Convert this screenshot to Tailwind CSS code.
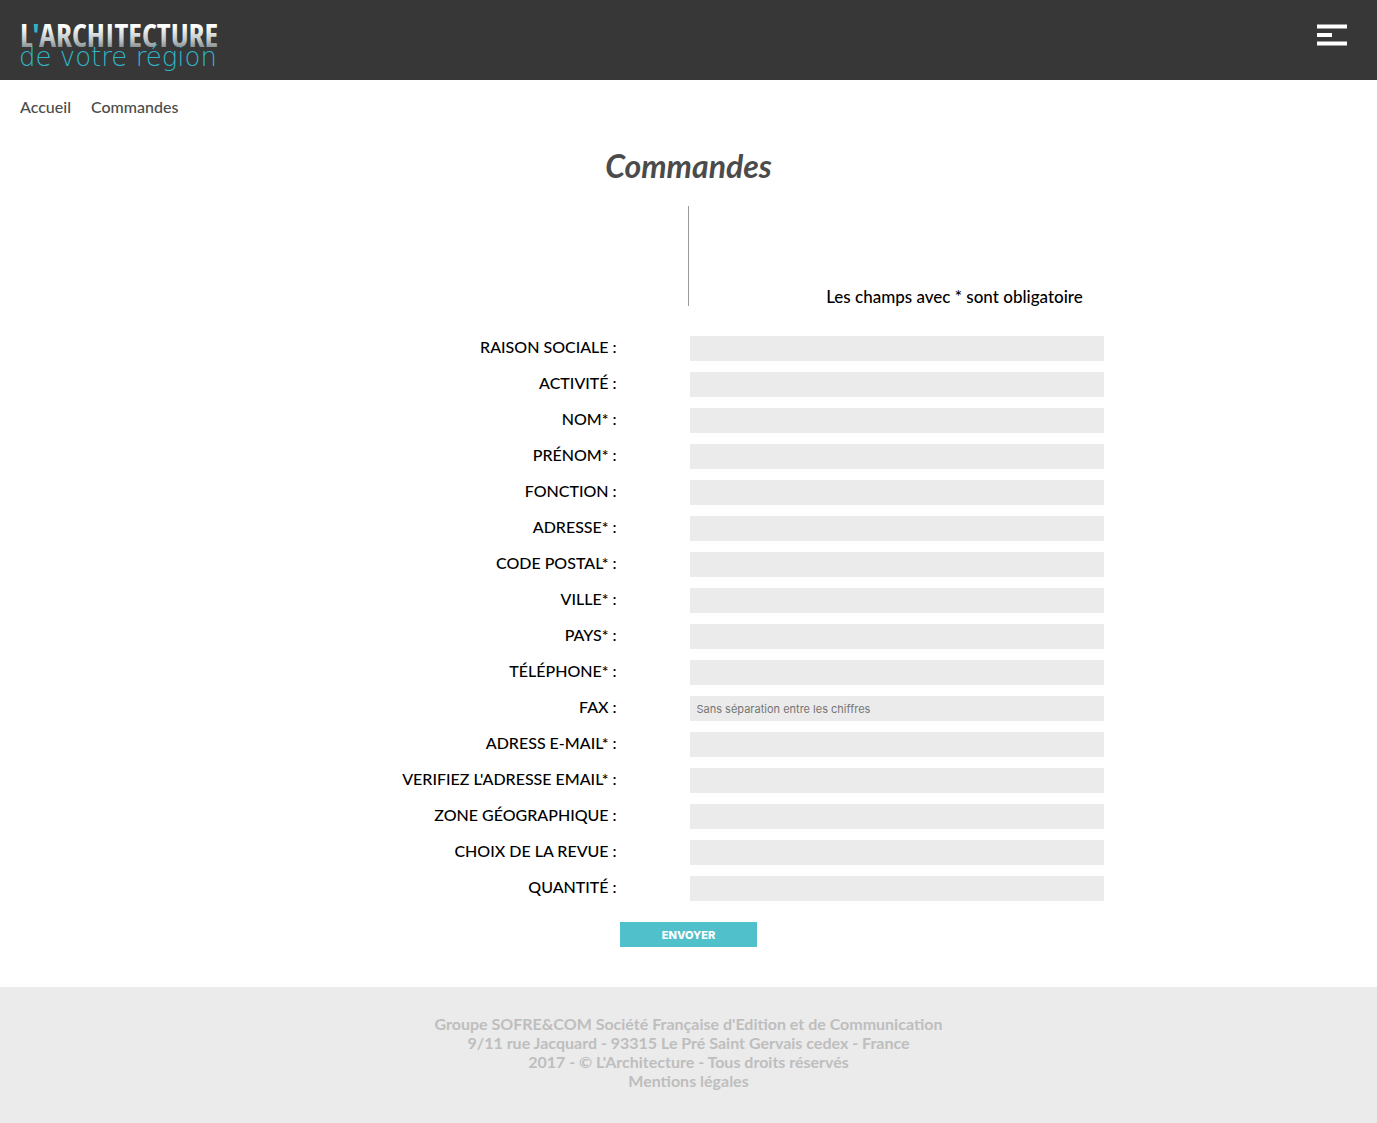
<!DOCTYPE html>
<html lang="fr">
<head>
<meta charset="utf-8">
<meta name="viewport" content="width=device-width, initial-scale=1">
<title>Commandes - L'Architecture de votre région</title>
<script src="https://cdn.jsdelivr.net/npm/@tailwindcss/browser@4"></script>
</head>
<body class="flex min-h-screen flex-col bg-white font-['Futura','Lato',sans-serif] text-base font-medium text-black">
<header class="flex h-20 items-start justify-between bg-[#373737] px-5">
  <a href="#" aria-label="L'Architecture de votre région">
    <svg class="block h-20 w-[204px]" viewBox="0 0 204 80">
      <defs>
        <linearGradient id="silver" x1="0" y1="0" x2="0" y2="1">
          <stop offset="0.3" stop-color="#ffffff"/>
          <stop offset="0.6" stop-color="#c3cccf"/>
          <stop offset="0.85" stop-color="#7d8385"/>
        </linearGradient>
      </defs>
      <text x="0" y="47" class="font-['Liberation_Sans_Narrow','Open_Sans_Condensed',sans-serif] text-[32px] font-bold" fill="url(#silver)">L<tspan fill="#2fb5c6">'</tspan>ARCHITECTURE</text>
      <text x="-1" y="66" class="font-['DejaVu_Sans_Light','DejaVu_Sans',sans-serif] text-[26px] font-extralight" fill="#2fb5c6">de votre région</text>
    </svg>
  </a>
  <button type="button" aria-label="Menu" class="mt-6 mr-2.5">
    <svg class="block h-[22px] w-[30px]" viewBox="0 0 30 22" fill="#fff">
      <rect x="0" y="0.5" width="30" height="4" />
      <rect x="0" y="9" width="15" height="4" />
      <rect x="0" y="17.5" width="30" height="4" />
    </svg>
  </button>
</header>
<nav aria-label="Fil d'Ariane" class="flex gap-5 px-5 pt-[15px] text-[#4b4b4b]">
  <a href="#">Accueil</a>
  <a href="#">Commandes</a>
</nav>
<main class="grow pb-10">
  <h1 class="mt-[27px] text-center text-[32px] leading-[40px] font-bold text-[#4b4b4b] italic">Commandes</h1>
  <form>
    <div class="mt-5 grid h-[100px] grid-cols-2">
      <div class="border-r border-[#999]"></div>
      <p class="flex items-end pl-[20%] text-[17px] leading-[18px]">Les champs avec * sont obligatoire</p>
    </div>
    <div class="mt-[30px] flex flex-col gap-[11px] leading-[22px]">
      <div class="flex h-[25px]"><label for="f1" class="mr-[5%] w-[45%] pr-[3px] text-right">RAISON SOCIALE :</label><input id="f1" type="text" class="ml-0.5 w-[30%] bg-[#ebebeb] px-1.5 pt-px font-['Inter',sans-serif] text-[11px] font-normal"></div>
      <div class="flex h-[25px]"><label for="f2" class="mr-[5%] w-[45%] pr-[3px] text-right">ACTIVITÉ :</label><input id="f2" type="text" class="ml-0.5 w-[30%] bg-[#ebebeb] px-1.5 pt-px font-['Inter',sans-serif] text-[11px] font-normal"></div>
      <div class="flex h-[25px]"><label for="f3" class="mr-[5%] w-[45%] pr-[3px] text-right">NOM* :</label><input id="f3" type="text" class="ml-0.5 w-[30%] bg-[#ebebeb] px-1.5 pt-px font-['Inter',sans-serif] text-[11px] font-normal"></div>
      <div class="flex h-[25px]"><label for="f4" class="mr-[5%] w-[45%] pr-[3px] text-right">PRÉNOM* :</label><input id="f4" type="text" class="ml-0.5 w-[30%] bg-[#ebebeb] px-1.5 pt-px font-['Inter',sans-serif] text-[11px] font-normal"></div>
      <div class="flex h-[25px]"><label for="f5" class="mr-[5%] w-[45%] pr-[3px] text-right">FONCTION :</label><input id="f5" type="text" class="ml-0.5 w-[30%] bg-[#ebebeb] px-1.5 pt-px font-['Inter',sans-serif] text-[11px] font-normal"></div>
      <div class="flex h-[25px]"><label for="f6" class="mr-[5%] w-[45%] pr-[3px] text-right">ADRESSE* :</label><input id="f6" type="text" class="ml-0.5 w-[30%] bg-[#ebebeb] px-1.5 pt-px font-['Inter',sans-serif] text-[11px] font-normal"></div>
      <div class="flex h-[25px]"><label for="f7" class="mr-[5%] w-[45%] pr-[3px] text-right">CODE POSTAL* :</label><input id="f7" type="text" class="ml-0.5 w-[30%] bg-[#ebebeb] px-1.5 pt-px font-['Inter',sans-serif] text-[11px] font-normal"></div>
      <div class="flex h-[25px]"><label for="f8" class="mr-[5%] w-[45%] pr-[3px] text-right">VILLE* :</label><input id="f8" type="text" class="ml-0.5 w-[30%] bg-[#ebebeb] px-1.5 pt-px font-['Inter',sans-serif] text-[11px] font-normal"></div>
      <div class="flex h-[25px]"><label for="f9" class="mr-[5%] w-[45%] pr-[3px] text-right">PAYS* :</label><input id="f9" type="text" class="ml-0.5 w-[30%] bg-[#ebebeb] px-1.5 pt-px font-['Inter',sans-serif] text-[11px] font-normal"></div>
      <div class="flex h-[25px]"><label for="f10" class="mr-[5%] w-[45%] pr-[3px] text-right">TÉLÉPHONE* :</label><input id="f10" type="tel" class="ml-0.5 w-[30%] bg-[#ebebeb] px-1.5 pt-px font-['Inter',sans-serif] text-[11px] font-normal"></div>
      <div class="flex h-[25px]"><label for="f11" class="mr-[5%] w-[45%] pr-[3px] text-right">FAX :</label><input id="f11" type="tel" placeholder="Sans séparation entre les chiffres" class="ml-0.5 w-[30%] bg-[#ebebeb] px-1.5 pt-px font-['Inter',sans-serif] text-[11px] font-normal placeholder:text-[#757575]"></div>
      <div class="flex h-[25px]"><label for="f12" class="mr-[5%] w-[45%] pr-[3px] text-right">ADRESS E-MAIL* :</label><input id="f12" type="email" class="ml-0.5 w-[30%] bg-[#ebebeb] px-1.5 pt-px font-['Inter',sans-serif] text-[11px] font-normal"></div>
      <div class="flex h-[25px]"><label for="f13" class="mr-[5%] w-[45%] pr-[3px] text-right">VERIFIEZ L'ADRESSE EMAIL* :</label><input id="f13" type="email" class="ml-0.5 w-[30%] bg-[#ebebeb] px-1.5 pt-px font-['Inter',sans-serif] text-[11px] font-normal"></div>
      <div class="flex h-[25px]"><label for="f14" class="mr-[5%] w-[45%] pr-[3px] text-right">ZONE GÉOGRAPHIQUE :</label><input id="f14" type="text" class="ml-0.5 w-[30%] bg-[#ebebeb] px-1.5 pt-px font-['Inter',sans-serif] text-[11px] font-normal"></div>
      <div class="flex h-[25px]"><label for="f15" class="mr-[5%] w-[45%] pr-[3px] text-right">CHOIX DE LA REVUE :</label><input id="f15" type="text" class="ml-0.5 w-[30%] bg-[#ebebeb] px-1.5 pt-px font-['Inter',sans-serif] text-[11px] font-normal"></div>
      <div class="flex h-[25px]"><label for="f16" class="mr-[5%] w-[45%] pr-[3px] text-right">QUANTITÉ :</label><input id="f16" type="text" class="ml-0.5 w-[30%] bg-[#ebebeb] px-1.5 pt-px font-['Inter',sans-serif] text-[11px] font-normal"></div>
    </div>
    <button type="submit" class="mx-auto mt-[21px] block h-[25px] w-[10%] bg-[#50c0cb] pt-0.5 font-['Inter',sans-serif] text-[11px] font-extrabold text-white">ENVOYER</button>
  </form>
</main>
<footer class="bg-[#ebebeb] pt-[27px] pb-[33px] text-center leading-[19px] font-bold text-[#bebebe]">
  <p>Groupe SOFRE&amp;COM Société Française d'Edition et de Communication</p>
  <p>9/11 rue Jacquard - 93315 Le Pré Saint Gervais cedex - France</p>
  <p>2017 - © L'Architecture - Tous droits réservés</p>
  <p><a href="#">Mentions légales</a></p>
</footer>
</body>
</html>
